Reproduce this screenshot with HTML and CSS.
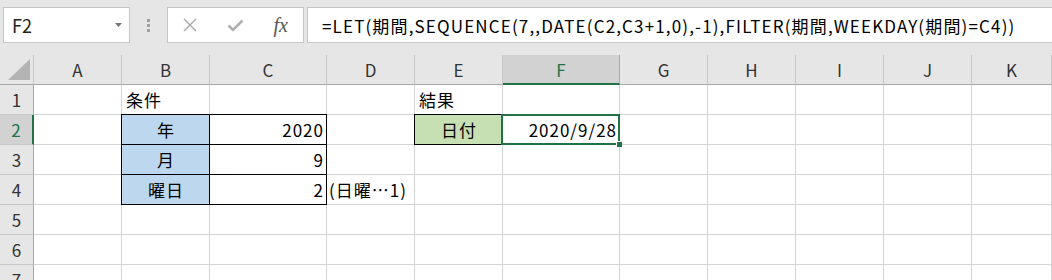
FILE: index.html
```html
<!DOCTYPE html>
<html lang="ja">
<head>
    <meta charset="UTF-8">
    <meta name="viewport" content="width=device-width, initial-scale=1.0">
    <title>LET関数 - 曜日</title>
    <link rel="stylesheet" href="styles.css">
</head>
<body>
    <div class="toolbar">
        <div class="namebox">
            <span>F2</span>
            <svg class="caret" width="7" height="4" viewBox="0 0 7 4"><path d="M0 0 H7 L3.5 4 Z" fill="#777"/></svg>
        </div>
        <div class="grip"><i></i><i></i><i></i></div>
        <div class="buttons">
            <span class="btn">
                <svg width="14" height="14" viewBox="0 0 14 14"><path d="M1 1 L13 13 M13 1 L1 13" stroke="#a8a8a8" stroke-width="1.4" fill="none"/></svg>
            </span>
            <span class="btn">
                <svg width="17" height="13" viewBox="0 0 17 13"><path d="M1.5 6.5 L6 11 L15.5 1.5" stroke="#b0b0b0" stroke-width="2.6" fill="none"/></svg>
            </span>
            <span class="btn fx">fx</span>
        </div>
        <div class="formula">=LET(期間,SEQUENCE(7,,DATE(C2,C3+1,0),-1),FILTER(期間,WEEKDAY(期間)=C4))</div>
    </div>

    <div class="sheet">
        <div class="hd corner">
            <svg width="22" height="21" viewBox="0 0 22 21"><path d="M22 0 V21 H0 Z" fill="#b4b4b4"/></svg>
        </div>
        <div class="hd col">A</div>
        <div class="hd col">B</div>
        <div class="hd col">C</div>
        <div class="hd col">D</div>
        <div class="hd col">E</div>
        <div class="hd col active">F</div>
        <div class="hd col">G</div>
        <div class="hd col">H</div>
        <div class="hd col">I</div>
        <div class="hd col">J</div>
        <div class="hd col">K</div>

        <div class="hd row">1</div>
        <div class="cell"></div>
        <div class="cell">条件</div>
        <div class="cell"></div>
        <div class="cell"></div>
        <div class="cell">結果</div>
        <div class="cell"></div>
        <div class="cell"></div>
        <div class="cell"></div>
        <div class="cell"></div>
        <div class="cell"></div>
        <div class="cell"></div>

        <div class="hd row active">2</div>
        <div class="cell"></div>
        <div class="cell boxed label blue">年</div>
        <div class="cell boxed num">2020</div>
        <div class="cell"></div>
        <div class="cell boxed label green">日付</div>
        <div class="cell num selected">2020/9/28</div>
        <div class="cell"></div>
        <div class="cell"></div>
        <div class="cell"></div>
        <div class="cell"></div>
        <div class="cell"></div>

        <div class="hd row">3</div>
        <div class="cell"></div>
        <div class="cell boxed label blue">月</div>
        <div class="cell boxed num">9</div>
        <div class="cell"></div>
        <div class="cell"></div>
        <div class="cell"></div>
        <div class="cell"></div>
        <div class="cell"></div>
        <div class="cell"></div>
        <div class="cell"></div>
        <div class="cell"></div>

        <div class="hd row">4</div>
        <div class="cell"></div>
        <div class="cell boxed label blue">曜日</div>
        <div class="cell boxed num">2</div>
        <div class="cell note">(日曜…1)</div>
        <div class="cell"></div>
        <div class="cell"></div>
        <div class="cell"></div>
        <div class="cell"></div>
        <div class="cell"></div>
        <div class="cell"></div>
        <div class="cell"></div>

        <div class="hd row">5</div>
        <div class="cell"></div><div class="cell"></div><div class="cell"></div><div class="cell"></div><div class="cell"></div>
        <div class="cell"></div><div class="cell"></div><div class="cell"></div><div class="cell"></div><div class="cell"></div><div class="cell"></div>

        <div class="hd row">6</div>
        <div class="cell"></div><div class="cell"></div><div class="cell"></div><div class="cell"></div><div class="cell"></div>
        <div class="cell"></div><div class="cell"></div><div class="cell"></div><div class="cell"></div><div class="cell"></div><div class="cell"></div>

        <div class="hd row">7</div>
        <div class="cell"></div><div class="cell"></div><div class="cell"></div><div class="cell"></div><div class="cell"></div>
        <div class="cell"></div><div class="cell"></div><div class="cell"></div><div class="cell"></div><div class="cell"></div><div class="cell"></div>
    </div>
</body>
</html>
```

FILE: styles.css
```css
html, body {
    margin: 0;
    padding: 0;
}

body {
    width: 1052px;
    height: 280px;
    overflow: hidden;
    background-color: #fff;
    font-family: "Noto Sans CJK JP", "Noto Sans", sans-serif;
    color: #000;
}

/* formula bar */
.toolbar {
    display: flex;
    align-items: flex-start;
    height: 55px;
    padding: 7px 0 0 3px;
    box-sizing: border-box;
    background-color: #e6e6e6;
}

.namebox {
    width: 127px;
    height: 36px;
    box-sizing: border-box;
    border: 1px solid #c6c6c6;
    background-color: #fff;
    display: flex;
    align-items: center;
    justify-content: space-between;
    padding: 0 7px 0 8px;
    font-size: 18px;
    color: #222;
}

.grip {
    width: 37px;
    height: 36px;
    display: flex;
    flex-direction: column;
    align-items: center;
    justify-content: center;
    gap: 2px;
}

.grip i {
    display: block;
    width: 3px;
    height: 3px;
    background-color: #a0a0a0;
}

.buttons {
    width: 137px;
    height: 36px;
    box-sizing: border-box;
    border: 1px solid #c6c6c6;
    background-color: #fff;
    display: flex;
    align-items: center;
}

.btn {
    width: 45px;
    display: flex;
    justify-content: center;
    align-items: center;
}

.fx {
    font-family: "Liberation Serif", serif;
    font-style: italic;
    font-size: 20px;
    color: #555;
    margin-left: 1px;
}

.formula {
    flex: 1;
    height: 36px;
    margin-left: 3px;
    box-sizing: border-box;
    border: 1px solid #c6c6c6;
    border-right: none;
    background-color: #fff;
    padding-left: 14px;
    display: flex;
    align-items: center;
    font-size: 17px;
    letter-spacing: 1.15px;
    white-space: nowrap;
    overflow: hidden;
}

/* sheet grid */
.sheet {
    display: grid;
    grid-template-columns: 34px 88px 88px 117px 88px 88px 117px 88px 88px 88px 88px 1fr;
    grid-auto-rows: 30px;
    font-size: 17px;
}

.hd, .cell {
    box-sizing: border-box;
    border-right: 1px solid #d4d4d4;
    border-bottom: 1px solid #d4d4d4;
    display: flex;
    align-items: center;
    white-space: nowrap;
}

.hd {
    background-color: #e6e6e6;
    justify-content: center;
    color: #333;
}

.hd.col {
    border-right-color: #c8c8c8;
    border-bottom-color: #a8a8a8;
}

.hd.row {
    border-right-color: #a8a8a8;
    border-bottom-color: #c8c8c8;
}

.hd.corner {
    justify-content: flex-end;
    align-items: flex-end;
    padding: 0 3px 4px 0;
    border-right-color: #c8c8c8;
    border-bottom-color: #a8a8a8;
}

.hd.col.active {
    background-color: #d2d2d2;
    border-right-color: #a8a8a8;
    border-bottom: 2px solid #217346;
    color: #217346;
}

.hd.row.active {
    background-color: #d2d2d2;
    border-right: 2px solid #217346;
    color: #217346;
}

.cell {
    padding: 0 3px 0 4px;
    letter-spacing: 1px;
}

.num {
    justify-content: flex-end;
    padding-right: 2px;
}

.label {
    justify-content: center;
}

.note {
    padding-left: 2px;
}

.blue {
    background-color: #bdd7ee;
}

.green {
    background-color: #c6e0b4;
}

.boxed {
    border-right-color: #000;
    border-bottom-color: #000;
    box-shadow: -1px 0 0 #000, 0 -1px 0 #000, -1px -1px 0 #000;
}

.selected {
    position: relative;
}

.selected::after {
    content: "";
    position: absolute;
    top: -1px;
    right: -1px;
    bottom: -1px;
    left: -2px;
    border: 2px solid #217346;
}

.selected::before {
    content: "";
    position: absolute;
    right: -3px;
    bottom: -3px;
    width: 5px;
    height: 5px;
    background-color: #217346;
    border: 1px solid #fff;
    border-right: none;
    border-bottom: none;
    z-index: 1;
}
```
